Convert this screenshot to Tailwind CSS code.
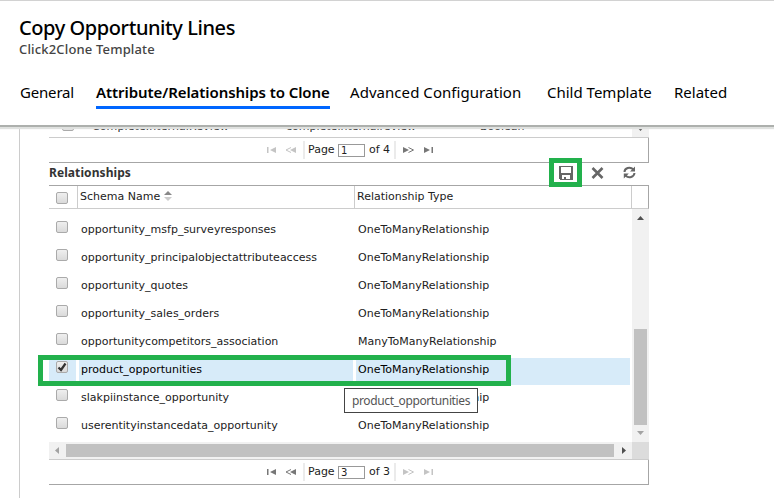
<!DOCTYPE html>
<html lang="en">
<head>
<meta charset="utf-8">
<title>Copy Opportunity Lines</title>
<script src="https://cdn.jsdelivr.net/npm/@tailwindcss/browser@4"></script>
</head>
<body class="w-[774px] h-[498px] overflow-hidden bg-white font-['DejaVu_Sans',sans-serif] text-[11px] text-[#222]">
<div class="relative flex h-[498px] flex-col">
  <header class="relative z-10 flex h-[127px] shrink-0 flex-col border-t border-b-2 border-t-[#d2d2d2] border-b-[#adb0ad] bg-white shadow-[0_2px_1px_#dfe1df] font-['Noto_Sans',sans-serif] whitespace-nowrap">
    <h1 class="mt-[14px] ml-[19px] h-[26px] text-[20px] leading-[26px] font-medium tracking-[-0.42px] text-black">Copy Opportunity Lines</h1>
    <p class="ml-[19px] h-4 text-[13px] leading-4 font-medium tracking-[0.16px] text-[#444]">Click2Clone Template</p>
    <nav class="mt-[22px] ml-5 flex text-[15px] leading-[26px] text-black">
      <span class="w-[76px] tracking-[-0.18px]">General</span>
      <span class="h-[30px] w-[234px] border-b-3 border-[#0066ff] font-semibold tracking-[-0.07px]">Attribute/Relationships to Clone</span>
      <span class="ml-5 w-[197px] tracking-[0.05px]">Advanced Configuration</span>
      <span class="w-[127px]">Child Template</span>
      <span>Related</span>
    </nav>
  </header>

  <main class="ml-[19px] flex-1 border-l border-[#ccc] pl-[29px]">
    <div class="flex w-[600px] flex-col">
      <section class="h-9 border-r border-b border-[#a6a6a6]">
        <div class="relative h-[11px] w-[600px] overflow-hidden border-b border-[#ccc]">
          <div class="absolute inset-x-0 bottom-0 flex h-[21px] items-center">
            <span class="ml-[13px] h-3 w-3 -translate-y-[2px] rounded-[2px] border border-[#aaa] bg-[#e1e1e1]"></span>
            <span class="ml-[18px] w-[194px] translate-y-px tracking-[0.1px]">CompleteInternalReview</span>
            <span class="w-[194px] translate-y-px">completeinternalreview</span>
            <span class="translate-y-px">Boolean</span>
            <span class="ml-auto flex h-full w-[17px] items-center justify-center bg-[#f1f1f1] pt-1"><svg width="7" height="4"><path d="M0 0h7L3.5 4z" fill="#555"/></svg></span>
          </div>
        </div>
        <div class="flex h-6 items-center pl-[218px]">
          <svg class="text-[#c4c4c4]" width="32" height="8" fill="currentColor"><path d="M0 1h1.500v6H0zM9 1v6L3 4z"/><path d="M24 1.500L19 4l5 2.500" fill="none" stroke="currentColor"/><path d="M29 1v6L23 4z"/></svg>
          <i class="ml-1 h-[18px] w-0.5 bg-[#ebebeb]"></i>
          <span class="ml-[3px] w-[30px]">Page</span>
          <span class="mt-px h-[13px] w-[27px] border border-[#999] pl-[2px] text-[10px] leading-[12px]">1</span>
          <span class="ml-1 w-[25px]">of 4</span>
          <i class="h-[18px] w-0.5 bg-[#ebebeb]"></i>
          <svg class="ml-[7px] text-[#777]" width="32" height="8" fill="currentColor"><path d="M0 1v6l6-3z"/><path d="M5.500 1.500L10.500 4 5.500 6.500" fill="none" stroke="currentColor"/><path d="M21 1v6l6-3zM28.500 1h1.500v6h-1.500z"/></svg>
        </div>
      </section>

      <div class="flex h-[22px] items-center">
        <h2 class="-mt-[3px] font-['Noto_Sans',sans-serif] text-[12px] leading-5 font-bold tracking-[0.08px] text-[#333]">Relationships</h2>
        <div class="relative z-10 -mt-[3px] ml-auto flex h-[29px] w-[33px] items-center justify-center border-5 border-[#22b14c] bg-white">
          <svg width="14" height="14" shape-rendering="crispEdges"><path fill="#666" d="M1 0H14V14H1L0 13V0z"/><path fill="#fff" d="M2 1h10v6H2zM3 9h8v4H3z"/><path fill="#666" d="M5 11h2v2H5z"/></svg>
        </div>
        <svg class="-mt-[3px] ml-[9px]" width="13" height="12"><path d="M1.500 1l10 10M11.500 1l-10 10" stroke="#666" stroke-width="2.600"/></svg>
        <svg class="-mt-[3px] mr-[13px] ml-[19px]" width="13" height="13" fill="none" stroke="#666" stroke-width="2"><path d="M1.500 6C1.500 2 7 0 10.500 3.500M11.500 7C11 11 6 13 2.500 9.500"/><path d="M12 .5V5.500H7zM.8 12.500V7.500h5z" fill="#666" stroke="none"/></svg>
      </div>

      <div class="flex h-6 border-t border-r border-b border-t-[#a6a6a6] border-r-[#a6a6a6] border-b-[#ccc] leading-[21px]">
        <div class="w-[29px] border-r border-[#ccc] pt-[6px] pl-[7px]"><div class="h-3 w-3 rounded-[2px] border border-[#aaa] bg-linear-to-b from-[#efefef] to-[#dadada]"></div></div>
        <div class="flex w-[277px] items-center border-r border-[#ccc] pl-0.5"><span class="pb-px">Schema Name</span><svg class="-mt-[2px] ml-1" width="8" height="10"><path d="M0 4L4 0l4 4z" fill="#888"/><path d="M0 6h8L4 10z" fill="#ccc"/></svg></div>
        <div class="flex-1 border-r border-[#ccc] pl-[2px]">Relationship Type</div>
        <div class="w-4"></div>
      </div>

      <div class="flex h-[233px]">
        <div class="flex w-[583px] flex-col pt-[9px]" id="rows"></div>
        <div class="flex w-[17px] flex-col items-center bg-[#f1f1f1]">
          <svg class="mt-[7px]" width="7" height="4"><path d="M3.500 0L7 4H0z" fill="#505050"/></svg>
          <div class="mt-[109px] h-24 w-[13px] bg-[#c1c1c1]"></div>
          <svg class="mt-[6px]" width="7" height="4"><path d="M0 0h7L3.500 4z" fill="#a3a3a3"/></svg>
        </div>
      </div>
      <div class="flex h-[18px] items-center border-b border-[#ccc] bg-[#f1f1f1]">
        <svg class="ml-[6px]" width="4" height="7"><path d="M4 0v7L0 3.500z" fill="#a3a3a3"/></svg>
        <div class="ml-[7px] h-[13px] w-[548px] bg-[#c1c1c1]"></div>
        <svg class="ml-2" width="4" height="7"><path d="M0 0v7l4-3.500z" fill="#505050"/></svg>
        <div class="ml-auto h-full w-[17px] bg-[#dcdcdc]"></div>
      </div>
      <div class="flex h-[25px] items-center border-r border-b border-[#a6a6a6] pl-[218px]">
        <svg class="text-[#777]" width="32" height="8" fill="currentColor"><path d="M0 1h1.500v6H0zM9 1v6L3 4z"/><path d="M24 1.500L19 4l5 2.500" fill="none" stroke="currentColor"/><path d="M29 1v6L23 4z"/></svg>
        <i class="ml-1 h-[18px] w-0.5 bg-[#ebebeb]"></i>
        <span class="ml-[3px] w-[30px]">Page</span>
        <span class="mt-px h-[13px] w-[27px] border border-[#999] pl-[2px] text-[10px] leading-[12px]">3</span>
        <span class="ml-1 w-[25px]">of 3</span>
        <i class="h-[18px] w-0.5 bg-[#ebebeb]"></i>
        <svg class="ml-[7px] text-[#c4c4c4]" width="32" height="8" fill="currentColor"><path d="M0 1v6l6-3z"/><path d="M5.500 1.500L10.500 4 5.500 6.500" fill="none" stroke="currentColor"/><path d="M21 1v6l6-3zM28.500 1h1.500v6h-1.500z"/></svg>
      </div>
    </div>
  </main>

  <div class="absolute top-[355px] left-[38px] z-10 h-[31px] w-[473px] border-5 border-[#22b14c]"></div>
  <div class="absolute top-[388px] left-[344px] z-20 h-[25px] w-[134px] border border-[#444] bg-white pl-[7px] font-['Noto_Sans',sans-serif] text-[12px] leading-[24px] tracking-[-0.38px] text-[#555]">product_opportunities</div>
</div>
<script>
const rows = [
  ['opportunity_msfp_surveyresponses', 'OneToManyRelationship'],
  ['opportunity_principalobjectattributeaccess', 'OneToManyRelationship'],
  ['opportunity_quotes', 'OneToManyRelationship'],
  ['opportunity_sales_orders', 'OneToManyRelationship'],
  ['opportunitycompetitors_association', 'ManyToManyRelationship'],
  ['product_opportunities', 'OneToManyRelationship', true],
  ['slakpiinstance_opportunity', 'OneToManyRelationship'],
  ['userentityinstancedata_opportunity', 'OneToManyRelationship']
];
const check = '<svg width="10" height="10"><path d="M1.5 5.500L4 8 8.500 1.500" fill="none" stroke="#333" stroke-width="2.200"/></svg>';
document.getElementById('rows').innerHTML = rows.map(([name, type, on]) => {
  const bg = on ? 'bg-[#d7ebf9] text-black' : '';
  return `<div class="flex h-[28px] shrink-0 gap-[3px] pb-px leading-[23px]">
    <div class="w-[27px] pt-[3px] pl-[7px] ${bg}"><div class="h-3 w-3 rounded-[2px] border border-[#aaa] bg-linear-to-b from-[#efefef] to-[#dadada]">${on ? check : ''}</div></div>
    <div class="w-[274px] pl-[2px] ${bg}">${name}</div>
    <div class="w-[274px] pl-[2px] ${bg}">${type}</div>
  </div>`;
}).join('');
</script>
</body>
</html>
